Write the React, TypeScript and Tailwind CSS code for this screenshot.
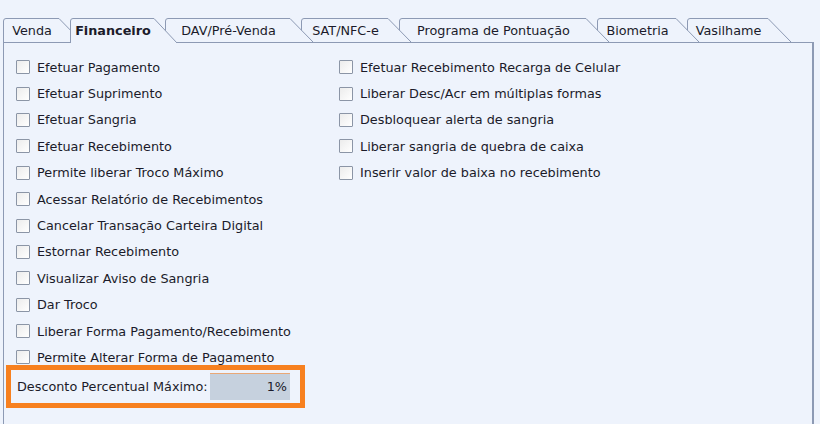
import React from 'react';

interface TabDef {
  label: string;
  width: number;
  active?: boolean;
}

const tabs: TabDef[] = [
  { label: 'Venda', width: 67 },
  { label: 'Financeiro', width: 95, active: true },
  { label: 'DAV/Pré-Venda', width: 136 },
  { label: 'SAT/NFC-e', width: 98 },
  { label: 'Programa de Pontuação', width: 198 },
  { label: 'Biometria', width: 90 },
  { label: 'Vasilhame', width: 92 },
];

const leftOptions = [
  'Efetuar Pagamento',
  'Efetuar Suprimento',
  'Efetuar Sangria',
  'Efetuar Recebimento',
  'Permite liberar Troco Máximo',
  'Acessar Relatório de Recebimentos',
  'Cancelar Transação Carteira Digital',
  'Estornar Recebimento',
  'Visualizar Aviso de Sangria',
  'Dar Troco',
  'Liberar Forma Pagamento/Recebimento',
  'Permite Alterar Forma de Pagamento',
];

const rightOptions = [
  'Efetuar Recebimento Recarga de Celular',
  'Liberar Desc/Acr em múltiplas formas',
  'Desbloquear alerta de sangria',
  'Liberar sangria de quebra de caixa',
  'Inserir valor de baixa no recebimento',
];

const Tab: React.FC<{ tab: TabDef; z: number }> = ({ tab, z }) => {
  const w = tab.width;
  const h = tab.active ? 25 : 24;
  const path = `M0.5,${h} V3 Q0.5,0.5 3,0.5 H${w - 11} L${w + 12},${h}`;
  return (
    <div className="relative h-[24px] shrink-0" style={{ width: w, zIndex: tab.active ? 20 : z }}>
      <svg className="absolute left-0 top-0 overflow-visible" width={w + 13} height={h} viewBox={`0 0 ${w + 13} ${h}`}>
        <path d={path + ' Z'} fill="#eef3fc" stroke="none" />
        <path d={path} fill="none" stroke="#8d9ab4" strokeWidth="1" />
      </svg>
      <div
        className={`relative flex h-full items-center justify-center pl-[2px] pt-[2px] text-[12.8px] text-[#1b1b2a] ${tab.active ? 'font-bold' : ''}`}
        style={{ width: w - 11 }}
      >
        <span className="whitespace-nowrap">{tab.label}</span>
      </div>
    </div>
  );
};

const CheckOption: React.FC<{ label: string }> = ({ label }) => (
  <div className="flex h-[26.4px] items-center gap-[7px]">
    <span className="h-[14px] w-[14px] shrink-0 rounded-[1px] border border-[#8b95a6] bg-gradient-to-br from-[#ececec] to-white" />
    <span className="whitespace-nowrap text-[12.8px] text-[#1b1b2a]">{label}</span>
  </div>
);

export default function App() {
  return (
    <div className="h-[424px] w-[820px] overflow-hidden bg-[#eef3fc] font-['DejaVu_Sans',sans-serif]">
      <div className="flex h-[42px] pl-[3px] pt-[18px]">
        {tabs.map((t, i) => (
          <Tab key={t.label} tab={t} z={10 - i} />
        ))}
      </div>
      <div className="ml-[3px] h-[382px] w-[811px] border-l border-r-2 border-t border-[#8d9ab4] pl-[12px] pt-[11px]">
        <div className="grid grid-cols-[323px_1fr]">
          <div className="flex flex-col">
            {leftOptions.map((o) => (
              <CheckOption key={o} label={o} />
            ))}
            <div className="-ml-[10px] mt-[-6px] flex h-[43px] w-[299px] items-center justify-between border-[5px] border-[#f7801f] pl-[6px] pr-[10px]">
              <span className="whitespace-nowrap text-[12.8px] text-[#1b1b2a]">Desconto Percentual Máximo:</span>
              <div className="flex h-[27px] w-[80px] items-center justify-end border-t border-[#e9a877] bg-[#c6d1de] pr-[3px] text-[12.8px] text-[#1b1b2a]">
                1%
              </div>
            </div>
          </div>
          <div className="flex flex-col">
            {rightOptions.map((o) => (
              <CheckOption key={o} label={o} />
            ))}
          </div>
        </div>
      </div>
    </div>
  );
}
